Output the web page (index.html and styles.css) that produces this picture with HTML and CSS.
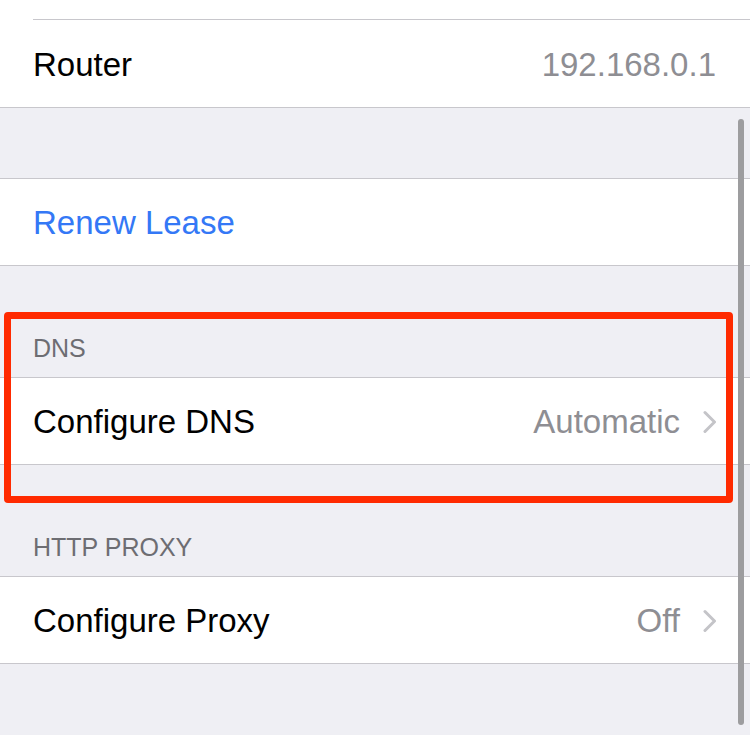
FILE: index.html
```html
<!DOCTYPE html>
<html>
<head>
<meta charset="utf-8">
<link rel="stylesheet" href="styles.css">
</head>
<body>
<div class="screen">
  <div class="group group-top">
    <div class="top-fill"></div>
    <div class="row row-router inset-sep">
      <span class="label">Router</span>
      <span class="value">192.168.0.1</span>
    </div>
  </div>

  <div class="gap"></div>

  <div class="group">
    <div class="row">
      <span class="label link">Renew Lease</span>
    </div>
  </div>

  <div class="header"><span>DNS</span></div>
  <div class="group">
    <div class="row">
      <span class="label">Configure DNS</span>
      <span class="value">Automatic</span>
      <svg class="chev" width="14" height="24" viewBox="0 0 14 24"><polyline points="2,2.5 11.5,12 2,21.5" fill="none" stroke="#c4c4c8" stroke-width="3" stroke-linecap="round" stroke-linejoin="round"/></svg>
    </div>
  </div>

  <div class="header"><span>HTTP PROXY</span></div>
  <div class="group">
    <div class="row">
      <span class="label">Configure Proxy</span>
      <span class="value">Off</span>
      <svg class="chev" width="14" height="24" viewBox="0 0 14 24"><polyline points="2,2.5 11.5,12 2,21.5" fill="none" stroke="#c4c4c8" stroke-width="3" stroke-linecap="round" stroke-linejoin="round"/></svg>
    </div>
  </div>

  <div class="highlight"></div>
  <div class="scrollbar"></div>
</div>
</body>
</html>
```

FILE: styles.css
```css
html, body {
  margin: 0;
  padding: 0;
}
body {
  background: #efeff4;
  font-family: "Liberation Sans", Arial, sans-serif;
  width: 750px;
  height: 735px;
  overflow: hidden;
}
.screen {
  position: relative;
  width: 750px;
  height: 735px;
  background: #efeff4;
}
.group {
  background: #fff;
  border-top: 1px solid #c8c7cc;
  border-bottom: 1px solid #c8c7cc;
}
.group-top {
  border-top: none;
}
.top-fill {
  height: 19px;
}
.row {
  display: flex;
  align-items: center;
  box-sizing: border-box;
  height: 86px;
  padding: 2px 34px 0 33px;
  font-size: 33px;
  line-height: 84px;
}
.inset-sep {
  position: relative;
}
.inset-sep::before {
  content: "";
  position: absolute;
  left: 33px;
  right: 0;
  top: 0;
  height: 1px;
  background: #c8c7cc;
}
.row-router {
  height: 88px;
  padding-top: 4px;
}
.label {
  color: #000;
  flex: 1;
}
.link {
  color: #3478f6;
}
.value {
  color: #8e8e93;
}
.chev {
  margin-left: 23px;
  margin-right: -1px;
  display: block;
}
.gap {
  height: 70px;
}
.header {
  height: 111px;
  box-sizing: border-box;
  display: flex;
  align-items: flex-end;
  padding: 0 33px 16px;
  font-size: 25px;
  line-height: 25px;
  color: #6d6d72;
}
.highlight {
  position: absolute;
  left: 4px;
  top: 312px;
  width: 729px;
  height: 191px;
  box-sizing: border-box;
  border: 7px solid #ff2a00;
  border-radius: 4px;
}
.scrollbar {
  position: absolute;
  left: 738px;
  top: 119px;
  width: 6px;
  height: 606px;
  border-radius: 3px;
  background: #9d9d9f;
}
```
